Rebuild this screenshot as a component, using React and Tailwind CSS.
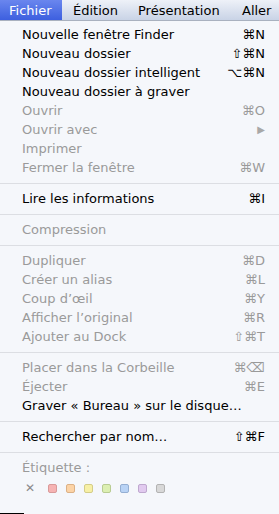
import React from "react";

const font = { fontFamily: '"DejaVu Sans", "Noto Sans", sans-serif' };

function Item({ label, shortcut, disabled, arrow }) {
  return (
    <div
      className={`flex h-[19px] items-center justify-between pl-[22px] pr-[14px] text-[13px] leading-none ${
        disabled ? "text-[#9a9a9a]" : "text-black"
      }`}
    >
      <span>{label}</span>
      {shortcut && <span>{shortcut}</span>}
      {arrow && <span className="text-[10px] text-[#a8a8a8]">▶</span>}
    </div>
  );
}

function Sep() {
  return (
    <div className="flex h-[12px] items-center">
      <div className="h-px w-full bg-[#dcdee3]" />
    </div>
  );
}

const colors = [
  ["#f6b3b3", "#d99a9a"],
  ["#fcd3a6", "#dcb186"],
  ["#f7f0a6", "#d4cd88"],
  ["#dcefb2", "#b9cc92"],
  ["#b9d3f5", "#95afd3"],
  ["#e1caef", "#bfa8cf"],
  ["#d8d8d8", "#b3b3b3"],
];

export default function App() {
  return (
    <div className="flex h-[514px] w-[279px] flex-col overflow-hidden bg-[#f5f7fb]" style={font}>
      <div className="flex h-[21px] shrink-0 items-center border-b border-[#a9b1bf] bg-gradient-to-b from-[#eef1f8] to-[#c9d3e6] text-[13px] leading-none text-black">
        <div className="flex h-full w-[62px] items-center bg-gradient-to-b from-[#6a86ee] to-[#3d5fdf] pl-[9px] text-white">
          Fichier
        </div>
        <div className="w-[76px] pl-[11px]">Édition</div>
        <div className="w-[104px]">Présentation</div>
        <div>Aller</div>
      </div>
      <div className="flex-1 pt-[4px]">
        <Item label="Nouvelle fenêtre Finder" shortcut="⌘N" />
        <Item label="Nouveau dossier" shortcut="⇧⌘N" />
        <Item label="Nouveau dossier intelligent" shortcut="⌥⌘N" />
        <Item label="Nouveau dossier à graver" />
        <Item label="Ouvrir" shortcut="⌘O" disabled />
        <Item label="Ouvrir avec" arrow disabled />
        <Item label="Imprimer" disabled />
        <Item label="Fermer la fenêtre" shortcut="⌘W" disabled />
        <Sep />
        <Item label="Lire les informations" shortcut="⌘I" />
        <Sep />
        <Item label="Compression" disabled />
        <Sep />
        <Item label="Dupliquer" shortcut="⌘D" disabled />
        <Item label="Créer un alias" shortcut="⌘L" disabled />
        <Item label="Coup d’œil" shortcut="⌘Y" disabled />
        <Item label="Afficher l’original" shortcut="⌘R" disabled />
        <Item label="Ajouter au Dock" shortcut="⇧⌘T" disabled />
        <Sep />
        <Item label="Placer dans la Corbeille" shortcut="⌘⌫" disabled />
        <Item label="Éjecter" shortcut="⌘E" disabled />
        <Item label="Graver « Bureau » sur le disque…" />
        <Sep />
        <Item label="Rechercher par nom…" shortcut="⇧⌘F" />
        <Sep />
        <Item label="Étiquette :" disabled />
        <div className="flex h-[22px] items-center pl-[25px]">
          <span className="w-[23px] text-[12px] leading-none text-[#8a8a8a]">✕</span>
          <div className="flex gap-[9px]">
            {colors.map(([bg, bd], i) => (
              <div
                key={i}
                className="h-[9px] w-[9px] rounded-[2px] border"
                style={{ backgroundColor: bg, borderColor: bd }}
              />
            ))}
          </div>
        </div>
      </div>
      <div className="h-px w-[24px] shrink-0 bg-black" />
    </div>
  );
}
